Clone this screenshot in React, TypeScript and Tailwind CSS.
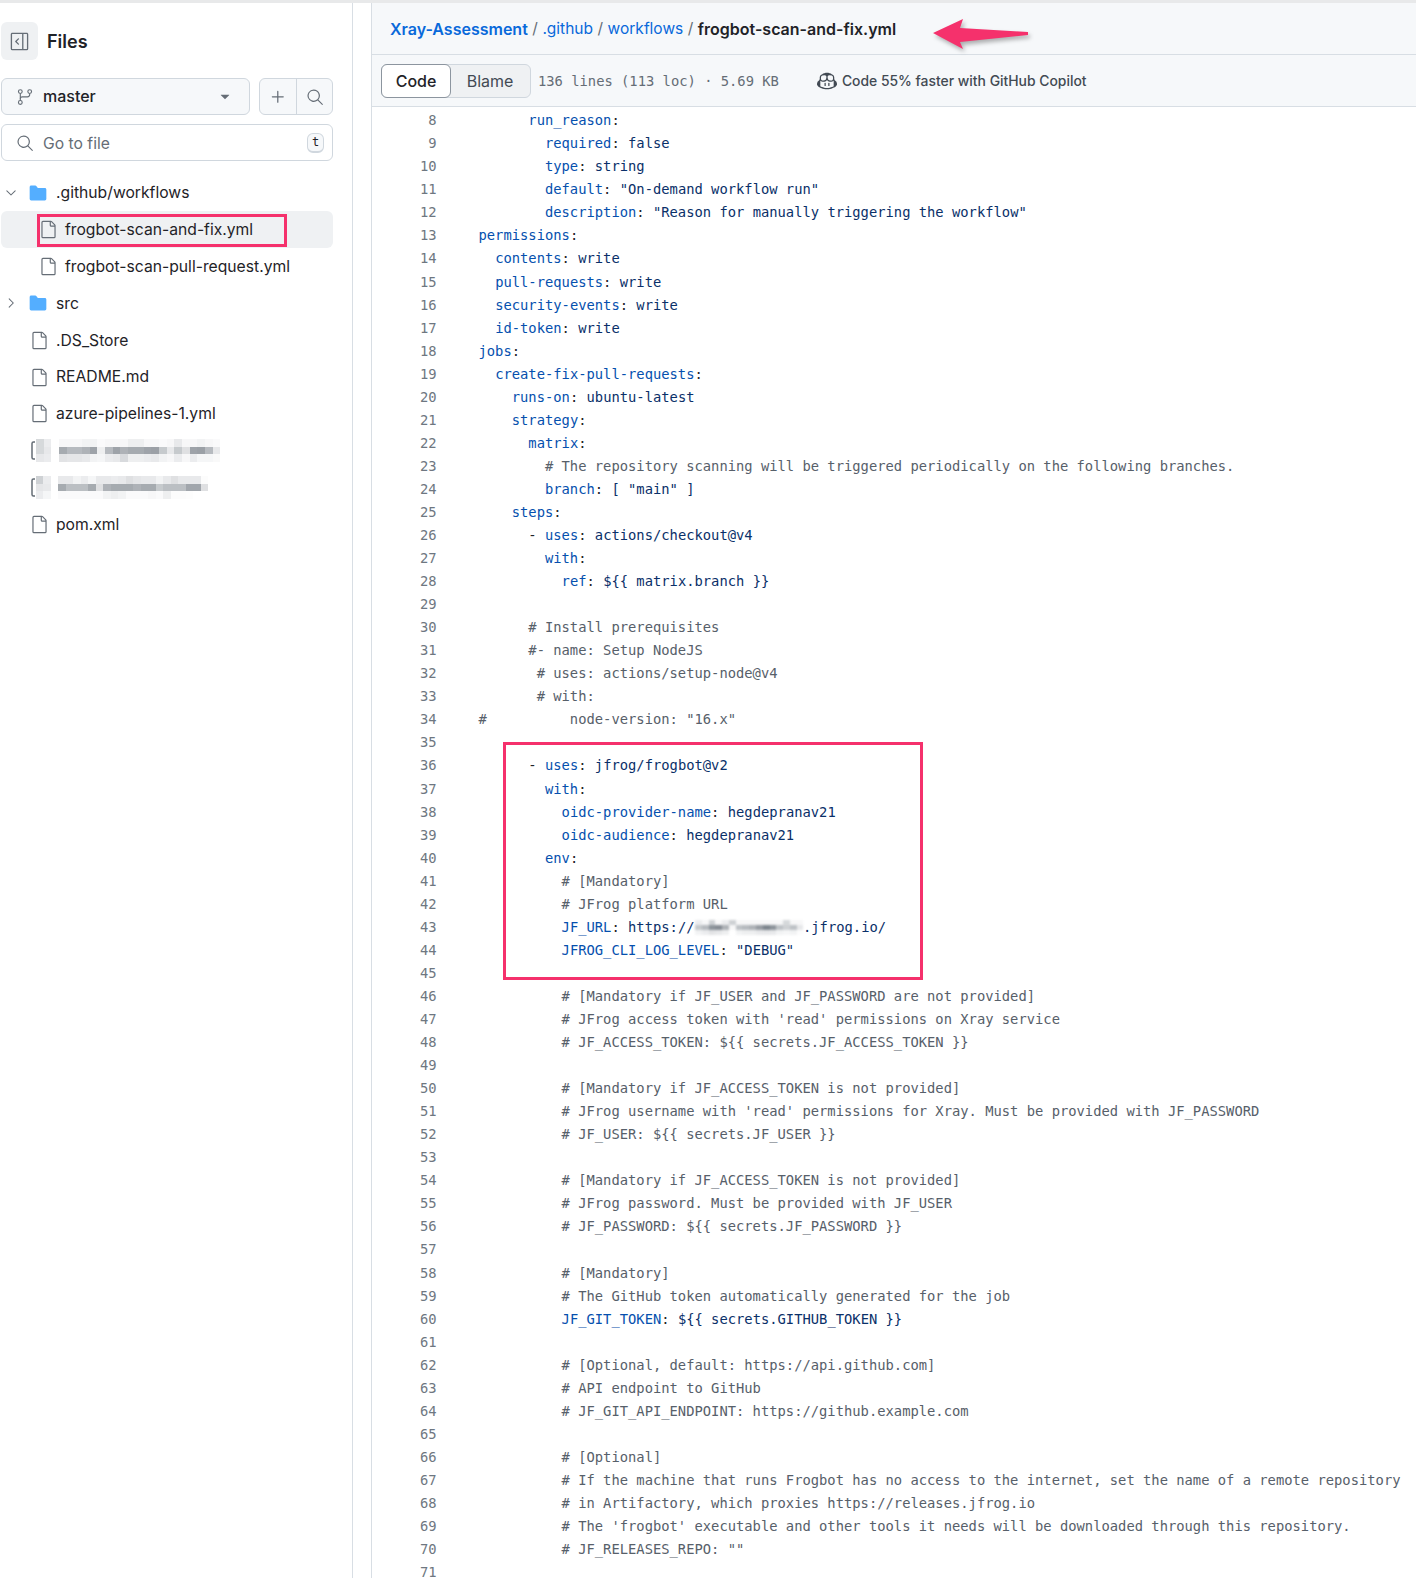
import { GoChevronDown, GoChevronRight, GoCopilot, GoFile, GoFileDirectoryFill, GoGitBranch, GoPlus, GoSearch, GoSidebarExpand, GoTriangleDown } from 'react-icons/go';

const sans = 'font-[Inter,sans-serif]';
const mono = "font-['DejaVu_Sans_Mono',monospace]";

const codeLines = [
  '      run_reason:',
  '        required: false',
  '        type: string',
  '        default: "On-demand workflow run"',
  '        description: "Reason for manually triggering the workflow"',
  'permissions:',
  '  contents: write',
  '  pull-requests: write',
  '  security-events: write',
  '  id-token: write',
  'jobs:',
  '  create-fix-pull-requests:',
  '    runs-on: ubuntu-latest',
  '    strategy:',
  '      matrix:',
  '        # The repository scanning will be triggered periodically on the following branches.',
  '        branch: [ "main" ]',
  '    steps:',
  '      - uses: actions/checkout@v4',
  '        with:',
  '          ref: ${{ matrix.branch }}',
  '',
  '      # Install prerequisites',
  '      #- name: Setup NodeJS',
  '       # uses: actions/setup-node@v4',
  '       # with:',
  '#          node-version: "16.x"',
  '',
  '      - uses: jfrog/frogbot@v2',
  '        with:',
  '          oidc-provider-name: hegdepranav21',
  '          oidc-audience: hegdepranav21',
  '        env:',
  '          # [Mandatory]',
  '          # JFrog platform URL',
  '          JF_URL: https://',
  '          JFROG_CLI_LOG_LEVEL: "DEBUG"',
  '',
  '          # [Mandatory if JF_USER and JF_PASSWORD are not provided]',
  "          # JFrog access token with 'read' permissions on Xray service",
  '          # JF_ACCESS_TOKEN: ${{ secrets.JF_ACCESS_TOKEN }}',
  '',
  '          # [Mandatory if JF_ACCESS_TOKEN is not provided]',
  "          # JFrog username with 'read' permissions for Xray. Must be provided with JF_PASSWORD",
  '          # JF_USER: ${{ secrets.JF_USER }}',
  '',
  '          # [Mandatory if JF_ACCESS_TOKEN is not provided]',
  '          # JFrog password. Must be provided with JF_USER',
  '          # JF_PASSWORD: ${{ secrets.JF_PASSWORD }}',
  '',
  '          # [Mandatory]',
  '          # The GitHub token automatically generated for the job',
  '          JF_GIT_TOKEN: ${{ secrets.GITHUB_TOKEN }}',
  '',
  '          # [Optional, default: https://api.github.com]',
  '          # API endpoint to GitHub',
  '          # JF_GIT_API_ENDPOINT: https://github.example.com',
  '',
  '          # [Optional]',
  '          # If the machine that runs Frogbot has no access to the internet, set the name of a remote repository',
  '          # in Artifactory, which proxies https://releases.jfrog.io',
  "          # The 'frogbot' executable and other tools it needs will be downloaded through this repository.",
  '          # JF_RELEASES_REPO: ""',
  '',
];

function CodeText({ text }: { text: string }) {
  if (text.trim().startsWith('#')) {
    return <span className="text-[#57606a]">{text}</span>;
  }
  const m = text.match(/^(\s*)(- )?([\w-]+):( ?)(.*)$/);
  if (!m) return <span>{text}</span>;
  return (
    <span>
      {m[1]}
      {m[2]}
      <span className="text-[#0550ae]">{m[3]}</span>:{m[4]}
      <span className="text-[#0a3069]">{m[5]}</span>
    </span>
  );
}

// pixelated smudge over a private name
function Smudge({ cells, className }: { cells: number[][]; className: string }) {
  const w = Math.max(...cells.map((r) => r.length));
  return (
    <svg viewBox={`0 0 ${w} ${cells.length}`} preserveAspectRatio="none" shapeRendering="crispEdges" className={className}>
      {cells.map((row, y) =>
        row.map((g, x) => <rect key={x} x={x} y={y} width="1" height="1" fill="#5d6670" opacity={g} />),
      )}
    </svg>
  );
}

const smudgeA = [
  [0.25, 0.12, 0, 0.05, 0.05, 0.05, 0.08, 0.08, 0.03, 0.05, 0.05, 0.05, 0.1, 0.1, 0.05, 0.05, 0.03, 0.05, 0.14, 0.05, 0.05, 0.08, 0.05, 0.03, 0],
  [0.25, 0.15, 0, 0.55, 0.45, 0.45, 0.5, 0.6, 0.1, 0.45, 0.6, 0.5, 0.55, 0.55, 0.6, 0.62, 0.35, 0.15, 0.35, 0.2, 0.6, 0.62, 0.45, 0.15, 0],
  [0.15, 0.12, 0, 0.18, 0.16, 0.16, 0.14, 0.08, 0.06, 0.12, 0.14, 0.24, 0.1, 0.1, 0.12, 0.14, 0.08, 0.05, 0.12, 0.05, 0.12, 0.06, 0.06, 0.04, 0],
];
const smudgeB = [
  [0.3, 0.12, 0, 0.14, 0.14, 0.08, 0.12, 0.06, 0.14, 0.14, 0.12, 0.14, 0.2, 0.16, 0.14, 0.14, 0.08, 0.14, 0.2, 0.14, 0.14, 0.14, 0.02],
  [0.16, 0.14, 0, 0.55, 0.42, 0.42, 0.42, 0.55, 0.2, 0.5, 0.55, 0.55, 0.55, 0.5, 0.55, 0.55, 0.35, 0.42, 0.42, 0.42, 0.58, 0.58, 0.2],
  [0.12, 0.06, 0, 0.03, 0.03, 0.03, 0.03, 0.03, 0.03, 0.08, 0.1, 0.08, 0.03, 0.03, 0.03, 0.05, 0.03, 0.1, 0.02, 0.02, 0.01, 0, 0],
];
const smudgeUrl = [
  [0.12, 0.05, 0.3, 0.05, 0.12, 0.3, 0.05, 0.05, 0.05, 0.05, 0.05, 0.05, 0.05, 0.25, 0.05, 0.05],
  [0.35, 0.45, 0.7, 0.75, 0.5, 0.05, 0.4, 0.45, 0.5, 0.65, 0.8, 0.7, 0.4, 0.3, 0.4, 0.15],
  [0.08, 0.12, 0.18, 0.15, 0.1, 0, 0.08, 0.1, 0.1, 0.14, 0.15, 0.14, 0.08, 0.06, 0.08, 0.02],
];

function BlurredRow({ cells, width }: { cells: number[][]; width: string }) {
  return (
    <div className="flex h-[36.85px] items-center pl-[29px]">
      <svg width="6" height="19" viewBox="0 0 6 19" className="shrink-0">
        <path d="M5 1 H3.5 A1.5 1.5 0 0 0 2 2.5 V16.5 A1.5 1.5 0 0 0 3.5 18 H5" fill="none" stroke="#656d76" strokeWidth="1.5" />
      </svg>
      <Smudge cells={cells} className={`h-[23px] ${width}`} />
    </div>
  );
}

function TreeRow({ indent, children, selected }: { indent: number; children: React.ReactNode; selected?: boolean }) {
  return (
    <div className={`relative flex h-[36.85px] items-center rounded-md ${selected ? 'bg-[#eff1f3]' : ''}`} style={{ paddingLeft: indent }}>
      {children}
    </div>
  );
}

function FileRow({ name, indent = 29, selected }: { name: string; indent?: number; selected?: boolean }) {
  return (
    <TreeRow indent={indent} selected={selected}>
      <GoFile size={19} className="mr-[7px] shrink-0 text-[#656d76]" />
      <span className="text-[15.7px] text-[#1f2328]">{name}</span>
      {selected && <div className="absolute left-[36px] top-[3px] h-[33px] w-[250px] border-[3px] border-[#f5316c]" />}
    </TreeRow>
  );
}

export default function App() {
  return (
    <div className={`${sans} flex h-[1578px] w-[1416px] overflow-hidden border-t-[3px] border-[#e8e9ea] bg-white text-[#1f2328]`}>
      <aside className="w-[353px] shrink-0 border-r border-[#d8dee4] pl-px pr-[19px]">
        <div className="mt-[19px] flex items-center gap-[9px]">
          <div className="flex h-[38px] w-[37px] items-center justify-center rounded-md bg-[#eff1f3]">
            <GoSidebarExpand size={21} className="text-[#656d76]" />
          </div>
          <span className="text-[18px] font-semibold">Files</span>
        </div>
        <div className="mt-[18px] flex gap-[9px]">
          <div className="flex h-[37px] w-[249px] items-center rounded-md border border-[#d0d7de] bg-[#f6f8fa] pl-[14px] pr-[16px]">
            <GoGitBranch size={18} className="text-[#656d76]" />
            <span className="ml-[9px] flex-1 pb-[2px] text-[16px] font-medium">master</span>
            <GoTriangleDown size={16} className="text-[#656d76]" />
          </div>
          <div className="flex h-[37px] w-[74px] rounded-md border border-[#d0d7de] bg-[#f6f8fa] text-[#656d76]">
            <div className="flex w-[37px] items-center justify-center border-r border-[#d0d7de]">
              <GoPlus size={20} />
            </div>
            <div className="flex flex-1 items-center justify-center">
              <GoSearch size={18} />
            </div>
          </div>
        </div>
        <div className="mt-[9px] flex h-[37px] items-center rounded-md border border-[#d0d7de] pl-[14px] pr-2">
          <GoSearch size={18} className="text-[#656d76]" />
          <span className="ml-[9px] flex-1 pt-[2px] text-[15.7px] text-[#656d76]">Go to file</span>
          <span className={`${mono} flex h-[20px] w-[17px] items-center justify-center rounded-md border border-[#d0d7de] border-b-2 bg-[#f6f8fa] text-[12px]`}>t</span>
        </div>
        <div className="mt-[13.5px]">
          <TreeRow indent={2}>
            <GoChevronDown size={16} className="mr-[9px] text-[#656d76]" />
            <GoFileDirectoryFill size={20} className="mr-[8px] text-[#54aeff]" />
            <span className="text-[15.7px]">.github/workflows</span>
          </TreeRow>
          <FileRow name="frogbot-scan-and-fix.yml" indent={38} selected />
          <FileRow name="frogbot-scan-pull-request.yml" indent={38} />
          <TreeRow indent={2}>
            <GoChevronRight size={16} className="mr-[9px] text-[#656d76]" />
            <GoFileDirectoryFill size={20} className="mr-[8px] text-[#54aeff]" />
            <span className="text-[15.7px]">src</span>
          </TreeRow>
          <FileRow name=".DS_Store" />
          <FileRow name="README.md" />
          <FileRow name="azure-pipelines-1.yml" />
          <BlurredRow cells={smudgeA} width="w-[192px]" />
          <BlurredRow cells={smudgeB} width="w-[172px]" />
          <FileRow name="pom.xml" />
        </div>
      </aside>

      <main className="relative ml-[18px] min-w-0 flex-1 border-l border-[#d8dee4]">
        <div className="relative flex h-[52px] items-center border-b border-[#d8dee4] bg-[#f6f8fa] pl-[18px] pt-px">
          <span className="text-[16px] font-semibold text-[#0969da]">Xray-Assessment</span>
          <span className="mx-[4.5px] text-[15.5px] text-[#656d76]">/</span>
          <span className="text-[15.5px] text-[#0969da]">.github</span>
          <span className="mx-[4.5px] text-[15.5px] text-[#656d76]">/</span>
          <span className="text-[15.5px] text-[#0969da]">workflows</span>
          <span className="mx-[4.5px] text-[15.5px] text-[#656d76]">/</span>
          <span className="text-[16px] font-semibold">frogbot-scan-and-fix.yml</span>
          <svg width="110" height="46" viewBox="0 0 110 46" className="absolute left-[559px] top-[4px] drop-shadow-[2px_3px_2px_rgba(0,0,0,0.3)]">
            <path d="M2 26 L32 12 L29 21 L97 25 L97 28 L29 35 L32 42 Z" fill="#f5316c" />
          </svg>
        </div>
        <div className="flex h-[52px] items-center border-b border-[#d8dee4] bg-[#f6f8fa] pl-[9px]">
          <div className="flex h-[34px] w-[150px] rounded-md border border-[#d0d7de] bg-[#eff1f3] text-[16px]">
            <div className="-m-px flex h-[34px] w-[70px] items-center justify-center rounded-md border border-[#8c959f] bg-white font-medium">Code</div>
            <div className="flex flex-1 items-center justify-center text-[#424a53]">Blame</div>
          </div>
          <span className={`${mono} ml-[7px] mt-[2px] text-[13.8px] text-[#656d76]`}>136 lines (113 loc) · 5.69 KB</span>
          <GoCopilot size={20} className="ml-[38px] text-[#424a53]" />
          <span className="ml-[5px] mt-[2px] text-[13.9px] font-medium text-[#424a53]">Code 55% faster with GitHub Copilot</span>
        </div>
        <div className={`${mono} pt-[2px] text-[13.8px] text-[#1f2328]`}>
          {codeLines.map((line, i) => (
            <div key={i} className="flex h-[23.05px] items-center whitespace-pre">
              <span className="w-[64.5px] shrink-0 text-right text-[#6e7781]">{i + 8}</span>
              <span className="ml-[42px]">
                <CodeText text={line} />
                {i + 8 === 43 && (
                  <>
                    <Smudge cells={smudgeUrl} className="inline-block h-[15px] w-[108.5px] align-middle blur-[1px]" />
                    <span className="text-[#0a3069]">.jfrog.io/</span>
                  </>
                )}
              </span>
            </div>
          ))}
        </div>
        <div className="absolute left-[131px] top-[739px] h-[238px] w-[420px] border-[3px] border-[#f5316c]" />
      </main>
    </div>
  );
}
